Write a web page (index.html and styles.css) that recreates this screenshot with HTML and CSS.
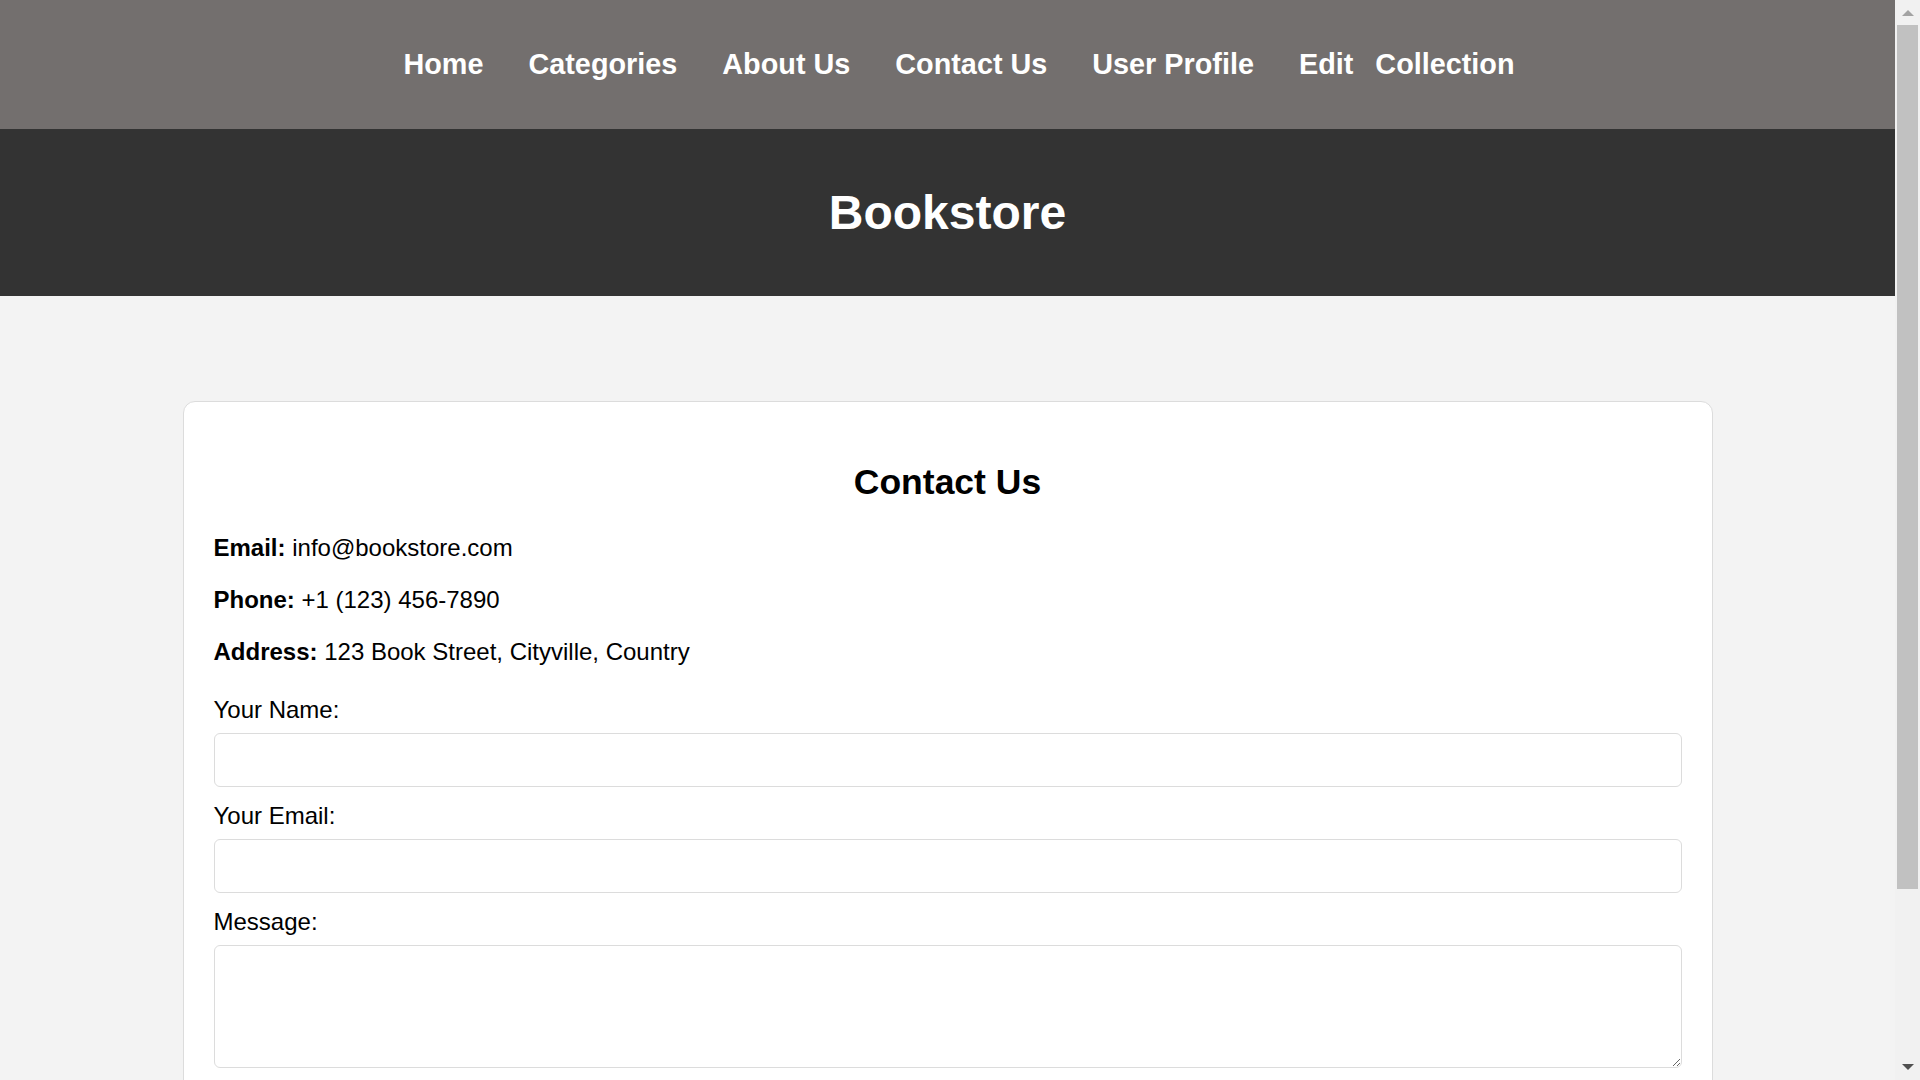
FILE: index.html
```html
<!DOCTYPE html>
<html lang="en">
<head>
<meta charset="UTF-8">
<title>Contact Us - Bookstore</title>
<link rel="stylesheet" href="styles.css">
</head>
<body>
<div class="page">
  <nav class="topnav">
    <a href="#">Home</a>
    <a href="#">Categories</a>
    <a href="#">About Us</a>
    <a href="#">Contact Us</a>
    <a href="#">User Profile</a>
    <a href="#" class="wide">Edit Collection</a>
  </nav>
  <header class="site-header">
    <h1>Bookstore</h1>
  </header>
  <main class="main">
    <section class="card">
      <h2>Contact Us</h2>
      <div class="info">
        <p><strong>Email:</strong> info@bookstore.com</p>
        <p><strong>Phone:</strong> +1 (123) 456-7890</p>
        <p><strong>Address:</strong> 123 Book Street, Cityville, Country</p>
      </div>
      <form class="form">
        <label for="name">Your Name:</label>
        <input type="text" id="name" class="field">
        <label for="email">Your Email:</label>
        <input type="email" id="email" class="field">
        <label for="message">Message:</label>
        <textarea id="message" class="field area"></textarea>
      </form>
    </section>
  </main>
</div>
<div class="scrollbar" aria-hidden="true">
  <div class="sb-btn">
    <svg width="12" height="7" viewBox="0 0 12 7"><path d="M0 7 L6 1 L12 7 Z" fill="#a3a3a3"/></svg>
  </div>
  <div class="sb-thumb"></div>
  <div class="sb-fill"></div>
  <div class="sb-btn">
    <svg width="12" height="7" viewBox="0 0 12 7"><path d="M0 0 L12 0 L6 6 Z" fill="#505050"/></svg>
  </div>
</div>
</body>
</html>
```

FILE: styles.css
```css
html, body {
  margin: 0;
  height: 100%;
}
body {
  display: flex;
  overflow: hidden;
  background: #f3f3f3;
  font-family: "Liberation Sans", Arial, sans-serif;
  color: #000;
}
.page {
  flex: 1;
  min-width: 0;
  overflow: hidden;
}

/* mock scrollbar */
.scrollbar {
  flex: none;
  width: 25px;
  background: #f1f1f1;
  display: flex;
  flex-direction: column;
  align-items: center;
}
.sb-btn {
  height: 25px;
  width: 25px;
  display: flex;
  align-items: center;
  justify-content: center;
}
.sb-thumb {
  width: 21px;
  height: 864px;
  background: #c1c1c1;
}
.sb-fill {
  flex: 1;
}

.topnav {
  height: 129px;
  background: #736f6e;
  display: flex;
  justify-content: center;
  align-items: center;
  gap: 45px;
  padding-left: 23px;
}
.topnav a {
  color: #fff;
  text-decoration: none;
  font-weight: bold;
  font-size: 28.8px;
  line-height: 33px;
  white-space: pre;
}
.topnav a.wide {
  word-spacing: 14px;
}

.site-header {
  height: 167px;
  background: #333;
  display: flex;
  align-items: center;
  justify-content: center;
}
.site-header h1 {
  margin: 0;
  color: #fff;
  font-size: 48px;
  line-height: 55px;
  font-weight: bold;
}

.main {
  padding: 105px 0 125px;
}
.card {
  width: 1530px;
  box-sizing: border-box;
  margin: 0 auto;
  background: #fff;
  border: 1px solid #dcdcdc;
  border-radius: 12px;
  padding: 30px;
}
.card h2 {
  margin: 29px 0 31px;
  text-align: center;
  font-size: 35.5px;
  line-height: 42px;
  font-weight: bold;
}
.info {
  display: flex;
  flex-direction: column;
  gap: 24px;
  margin-bottom: 30px;
}
.info p {
  margin: 0;
  font-size: 24px;
  line-height: 28px;
}
.form {
  display: flex;
  flex-direction: column;
}
.form label {
  font-size: 24px;
  line-height: 28px;
  margin-bottom: 9px;
}
.field {
  box-sizing: border-box;
  width: 100%;
  height: 54px;
  margin: 0 0 15px;
  border: 1px solid #dcdcdc;
  border-radius: 6px;
  background: #fff;
  padding: 10px 12px;
  font-family: "Liberation Sans", Arial, sans-serif;
  font-size: 20px;
}
.area {
  height: 123px;
  resize: vertical;
}
```
